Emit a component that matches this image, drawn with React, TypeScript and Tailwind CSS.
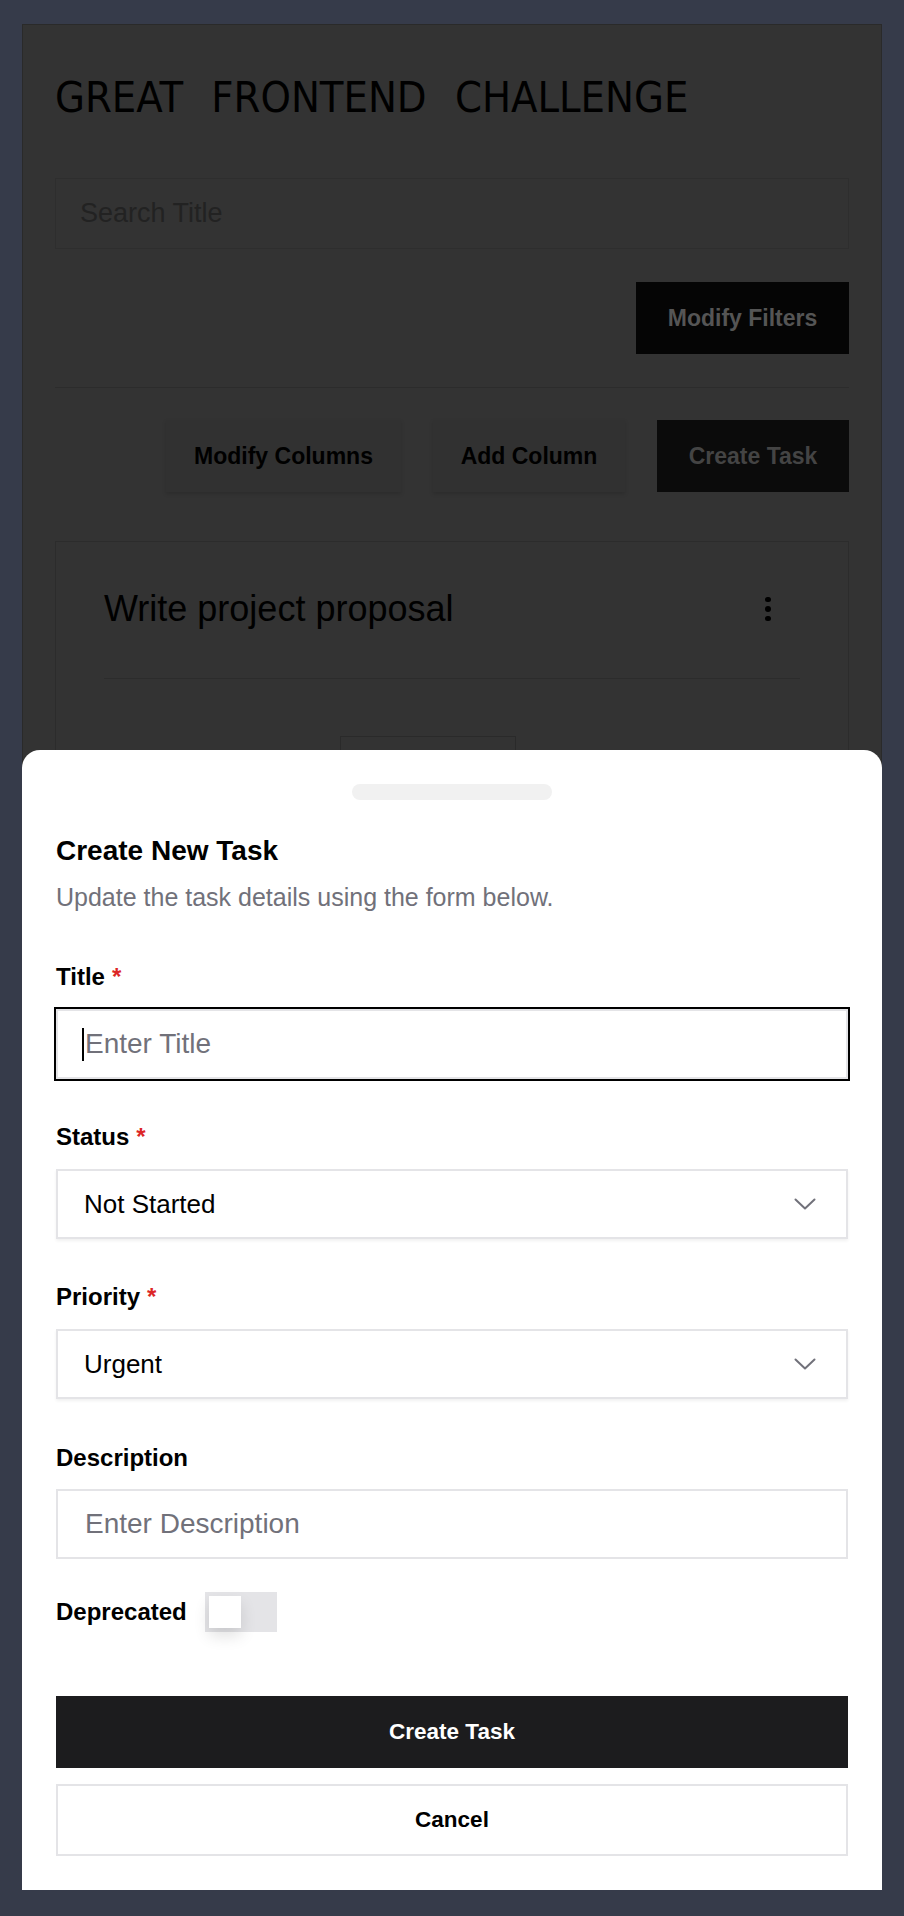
import React from 'react';

function Chevron() {
  return (
    <svg width="22" height="12" viewBox="0 0 22 12" fill="none">
      <polyline points="1.5,1.5 11,10.5 20.5,1.5" stroke="#71717a" strokeWidth="2" strokeLinecap="round" strokeLinejoin="round" />
    </svg>
  );
}

function Label({ text, required, className }: { text: string; required?: boolean; className?: string }) {
  return (
    <div className={`text-[24px] font-bold leading-8 text-black ${className ?? ''}`}>
      {text}
      {required && <span className="ml-[7px] text-[#dc2626]">*</span>}
    </div>
  );
}

function SelectBox({ value }: { value: string }) {
  return (
    <div className="mt-4 flex h-[70px] items-center justify-between border-2 border-[#e4e4e7] bg-white pl-[26px] pr-[30px] shadow-[0_2px_3px_rgba(0,0,0,0.06)]">
      <span className="text-[26px] text-black">{value}</span>
      <Chevron />
    </div>
  );
}

function Board() {
  return (
    <div className="px-8 pt-[44px]">
      <h1 className="font-['Liberation_Sans_Narrow','DejaVu_Sans_Condensed','Liberation_Sans',sans-serif] text-[43px] leading-[56px] text-black [word-spacing:16px]">
        GREAT FRONTEND CHALLENGE
      </h1>

      <div className="mt-[53px] flex h-[71px] items-center border border-[#2e2e2e] px-6 text-[27px] text-[#222]">
        Search Title
      </div>

      <div className="mt-[33px] flex justify-end">
        <button className="h-[72px] w-[213px] bg-[#050505] text-[23px] font-bold text-[#555]">Modify Filters</button>
      </div>

      <div className="mt-[33px] border-t border-[#2c2c2c]" />

      <div className="mt-[32px] flex justify-end gap-8">
        <button className="h-[72px] w-[235px] bg-[#313131] text-[23px] font-bold text-black shadow-[0_2px_4px_rgba(0,0,0,0.15)]">Modify Columns</button>
        <button className="h-[72px] w-[192px] bg-[#313131] text-[23px] font-bold text-black shadow-[0_2px_4px_rgba(0,0,0,0.15)]">Add Column</button>
        <button className="h-[72px] w-[192px] bg-[#0b0b0b] text-[23px] font-bold text-[#444]">Create Task</button>
      </div>

      <div className="mt-[49px] h-[500px] border border-[#2c2c2c] px-12 pt-[45px]">
        <div className="flex items-center justify-between">
          <h3 className="text-[36px] leading-[44px] text-black">Write project proposal</h3>
          <div className="flex w-16 flex-col items-center gap-[4px]">
            <span className="h-[5.5px] w-[5.5px] rounded-full bg-black" />
            <span className="h-[5.5px] w-[5.5px] rounded-full bg-black" />
            <span className="h-[5.5px] w-[5.5px] rounded-full bg-black" />
          </div>
        </div>
        <div className="mt-[47px] border-t border-[#2c2c2c]" />
        <div className="ml-[236px] mt-[57px] h-[60px] w-[176px] border border-[#2a2a2a]" />
      </div>
    </div>
  );
}

function CreateTaskSheet() {
  return (
    <div className="absolute -bottom-px -left-px -right-px rounded-t-[18px] bg-white px-[34px] pb-[34px] pt-[34px]">
      <div className="mx-auto h-4 w-[200px] rounded-full bg-[#f1f1f1]" />

      <h2 className="mt-[35px] text-[28px] font-bold leading-8 text-black">Create New Task</h2>
      <p className="mt-[14px] text-[25px] leading-8 text-[#71717a]">Update the task details using the form below.</p>

      <Label text="Title" required className="mt-[48px]" />
      <div className="relative mt-4">
        <input
          readOnly
          placeholder="Enter Title"
          className="h-[70px] w-full border-2 border-[#e4e4e7] bg-white px-[27px] text-[28px] text-black outline-2 outline-solid outline-black placeholder:text-[#71717a]"
        />
        <span className="absolute left-[26px] top-[19px] h-[33px] w-[2px] bg-black" />
      </div>

      <Label text="Status" required className="mt-[42px]" />
      <SelectBox value="Not Started" />

      <Label text="Priority" required className="mt-[42px]" />
      <SelectBox value="Urgent" />

      <Label text="Description" className="mt-[43px]" />
      <input
        readOnly
        placeholder="Enter Description"
        className="mt-[15px] h-[70px] w-full border-2 border-[#e4e4e7] bg-white px-[27px] text-[28px] text-black outline-none placeholder:text-[#71717a]"
      />

      <div className="mt-[33px] flex h-10 items-center gap-[18px]">
        <span className="text-[24px] font-bold leading-8 text-black">Deprecated</span>
        <div className="h-10 w-[72px] bg-[#e4e4e7] p-1">
          <div className="h-8 w-8 bg-white shadow-[0_8px_16px_rgba(0,0,0,0.12)]" />
        </div>
      </div>

      <button className="mt-[64px] h-[72px] w-full bg-[#1c1c1e] text-[22.5px] font-bold text-white">Create Task</button>
      <button className="mt-4 h-[72px] w-full border-2 border-[#e4e4e7] bg-white text-[22.5px] font-bold text-black">Cancel</button>
    </div>
  );
}

export default function App() {
  return (
    <div className="min-h-screen bg-[#363b4a] px-[22px] pt-6 font-['Liberation_Sans',Arial,sans-serif]">
      <div className="relative h-[1866px] border border-[#2a2a2a] bg-[#333333]">
        <Board />
        <CreateTaskSheet />
      </div>
    </div>
  );
}
